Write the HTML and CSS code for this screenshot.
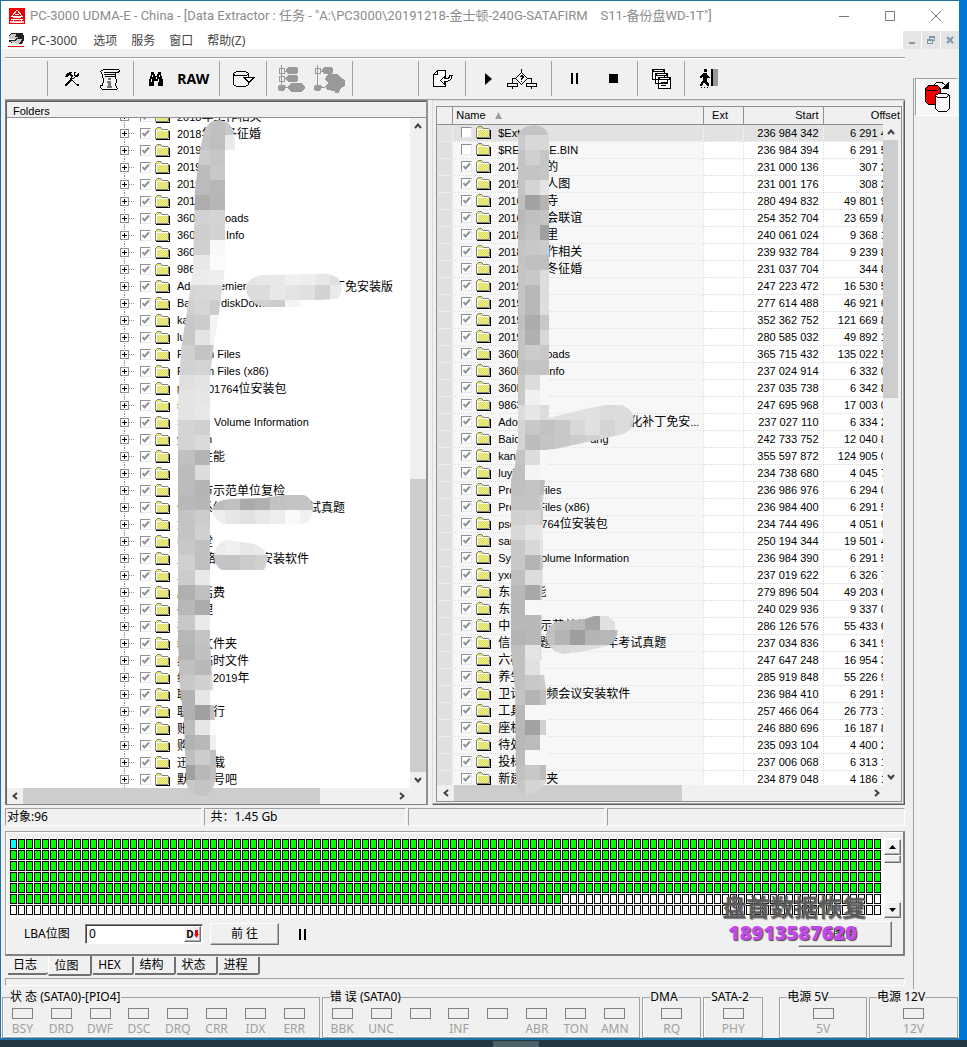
FILE: index.html
```html
<!DOCTYPE html>
<html lang="zh-CN">
<head>
<meta charset="utf-8">
<title>PC-3000 UDMA-E - China</title>
<link rel="stylesheet" href="styles.css">
</head>
<body>
<svg class="defs" aria-hidden="true">
  <defs>
    <pattern id="dither" width="2" height="2" patternUnits="userSpaceOnUse">
      <rect width="2" height="2" fill="#ffff00"/><rect width="1" height="1" fill="#ccccee"/><rect x="1" y="1" width="1" height="1" fill="#ccccee"/>
    </pattern>
    <symbol id="folder" viewBox="0 0 15 13">
      <path d="M1 2h1V1h4v1h1v1h6v8H1z" fill="url(#dither)"/>
      <path d="M2 0h4v1H2zM1 1h1v1H1zM6 1h1v1H6zM7 2h6v1H7zM0 2h1v9H0zM0 11h13v1H0zM13 3h1v8h-1z" fill="#808080"/>
      <path d="M1 3h12v1H1zM1 3h1v8H1z" fill="#fff"/>
      <path d="M1 12h14v1H1zM14 4h1v9h-1z" fill="#000"/>
    </symbol>
    <symbol id="up" viewBox="0 0 8 6"><path d="M1 5 4 1.500 7 5" fill="none" stroke="#404040" stroke-width="2"/></symbol>
    <symbol id="down" viewBox="0 0 8 6"><path d="M1 1 4 4.500 7 1" fill="none" stroke="#404040" stroke-width="2"/></symbol>
    <symbol id="left" viewBox="0 0 6 8"><path d="M5 1 1.500 4 5 7" fill="none" stroke="#404040" stroke-width="2"/></symbol>
    <symbol id="right" viewBox="0 0 6 8"><path d="M1 1 4.500 4 1 7" fill="none" stroke="#404040" stroke-width="2"/></symbol>
  </defs>
</svg>
<div class="desktop">
  <div class="window">
    <header class="titlebar">
      <svg class="i16" viewBox="0 0 16 16" shape-rendering="crispEdges"><rect width="16" height="16" fill="#f00000"/><path d="M8 2 3 8h10zM4 9h8M2 11h12M4 11v3h8v-3" fill="none" stroke="#fff" stroke-width="1"/><path d="M1 13h14v2H1z" fill="#fff" opacity=".8"/><path d="M6 6h4v1H6z" fill="#fff"/></svg>
      <span class="title">PC-3000 UDMA-E - China - [Data Extractor : 任务 - "A:\PC3000\20191218-金士顿-240G-SATAFIRM &nbsp;&nbsp; S11-备份盘WD-1T"]</span>
      <button class="cap" aria-label="最小化"><svg viewBox="0 0 10 10"><path d="M0 5.500h10" stroke="#777"/></svg></button>
      <button class="cap" aria-label="最大化"><svg viewBox="0 0 10 10"><path d="M.5.500h9v9h-9z" fill="none" stroke="#777"/></svg></button>
      <button class="cap" aria-label="关闭"><svg viewBox="0 0 10 10"><path d="M0 0l10 10M10 0 0 10" stroke="#777"/></svg></button>
    </header>
    <nav class="menubar">
      <svg class="i16" viewBox="0 0 16 15" shape-rendering="crispEdges"><path d="M4 0h10l2 3v5l-2 3H4L1 9V3z" fill="#222"/><path d="M1 4l3-3h5l-2 3 3 1-5 2-4-1zM3 9l5-1 2-2 4 1-3 4H4z" fill="#c8c8c8"/><path d="M1 6h6v1H1zM3 10h5v1H3z" fill="#fff"/><path d="M0 13h16v1H0z" fill="#e00000"/></svg>
      <button>PC-3000</button><button>选项</button><button>服务</button><button>窗口</button><button>帮助(Z)</button>
      <span class="mdi">
        <button aria-label="最小化子窗口"><svg viewBox="0 0 8 8"><path d="M1 6h6v2H1z" fill="#8097a5"/></svg></button>
        <button aria-label="还原子窗口"><svg viewBox="0 0 8 8" shape-rendering="crispEdges"><path d="M2 0h6v5H6V4h1V2H3v1H2zM0 3h6v5H0zM1 5v2h4V5z" fill="#8097a5" fill-rule="evenodd"/></svg></button>
        <button aria-label="关闭子窗口"><svg viewBox="0 0 8 8"><path d="M1 1l6 6M7 1 1 7" stroke="#8097a5" stroke-width="2"/></svg></button>
      </span>
    </nav>
    <div class="workspace">
      <div class="work">
        <div class="toolbar">
          <div class="tg g-first"></div>
          <div class="tg g-two">
            <button aria-label="工具"><svg width="16" height="16" viewBox="0 0 16 16" shape-rendering="crispEdges"><path d="M1 5h1V3h1V2h2V1h3v1H7v1h1v1h1v2H7V5H6V4H5v1H4v1H1zM10 1h2v1h-1v2h2V3h1V2h1v3h-1v1h-3V5h-1zM7 6h1v1h1v1h1v1h1v1h1v1h1v1h1v1h1v2h-2v-1h-1v-1h-1v-1h-1v-1H9v-1H8V9H7V8H6V7h1zM10 6h1v1h-1v1H9v1H8v1H7v1H6v1H5v1H4v1H3v1H1v-2h1v-1h1v-1h1v-1h1v-1h1V8h3V7h1z"/><path d="M8 8h1v1h1v1h1v1h1v1h1v1" fill="none" stroke="#fff"/></svg></button>
            <button aria-label="任务信息"><svg width="22" height="22" viewBox="0 0 22 22" shape-rendering="crispEdges"><path d="M4.500 1.500h15l1 1-1 2h-3v4l1 4-1 5 2 3-1 1h-14l-2-2v-2h2l1-5-1-6-2-3z" fill="#f4f4f4" stroke="#000"/><path d="M5 4.500h12M5 6.500h11M6 8.500h11" stroke="#000"/><path d="M9 10h3v2H9zM8 13h4v5h1v2H8v-2h1v-3H8z" fill="#777"/></svg></button>
          </div>
          <div class="tg g-two">
            <button aria-label="查找"><svg width="16" height="14" viewBox="0 0 16 14" shape-rendering="crispEdges"><path d="M3 0h3v2h1v2h2V2h1V0h3v3l1 2 1 4v5h-5V9H6v5H1V9l1-4 1-2z"/><path d="M4 3v2M3 7v3M11 3v2M10 7v3M8 5v2" stroke="#fff"/></svg></button>
            <button class="raw">RAW</button>
          </div>
          <div class="tg g-one">
            <button aria-label="导出"><svg width="23" height="18" viewBox="0 0 23 18" shape-rendering="crispEdges"><path d="M1.500 3.500l3-2h9l3 2v11l-3 2h-9l-3-2z" fill="#f8f8f8" stroke="#000"/><path d="M1 4.500l3 1h9l4-1" fill="none" stroke="#000"/><path d="M12 7.500h10l-5 5z" fill="#f8f8f8" stroke="#000"/></svg></button>
          </div>
          <div class="tg g-two">
            <button aria-label="展开树"><svg width="27" height="28" viewBox="0 0 27 28" shape-rendering="crispEdges"><g fill="none" stroke="#999"><path d="M3.500 0v22M1 3h5v5H1zM1 11h5v5H1zM6 6h4M6 13h4M6 22h5"/></g><g fill="#999"><path d="M10 2h8l2 2v3l-2 2h-8L8 7V4zM10 10h8l2 2v3l-2 2h-8l-2-2v-3zM1 20h5l2 2-2 4H1l-1-3zM14 18h9l4 3v3l-4 3h-9l-4-3v-3z"/></g></svg></button>
            <button aria-label="展开分支"><svg width="31" height="28" viewBox="0 0 31 28" shape-rendering="crispEdges"><g fill="none" stroke="#999"><path d="M3.500 0v22M1 3h5v5H1zM6 6h4M6 22h5"/></g><g fill="#999"><path d="M10 2h7l2 2v3l-2 2h-7L8 7V4zM1 20h5l2 2-2 4H1l-1-3zM12 11l3-2h8l3 3 5 3v6l-5 3-1 4h-4v-2l-8-1-2-4 3-3-3-3z"/></g></svg></button>
          </div>
          <div class="tg g-mid"></div>
          <div class="tg g-one">
            <button aria-label="转到"><svg width="21" height="20" viewBox="0 0 21 20" shape-rendering="crispEdges"><path d="M5.500 1.500h8v16h-12v-12z" fill="#fff" stroke="#000"/><path d="M1 5.500h4.500V1" fill="none" stroke="#000"/><path d="M8.500 11.500l4-4v2c3 1 5 0 5-3h2.500c0 4-3 6-7.500 6v3z" fill="#fff" stroke="#000"/></svg></button>
          </div>
          <div class="tg g-two tight">
            <button aria-label="开始"><svg width="7" height="12" viewBox="0 0 7 12"><path d="M0 0l7 6-7 6z"/></svg></button>
            <button aria-label="流程"><svg width="30" height="20" viewBox="0 0 30 20" shape-rendering="crispEdges"><path d="M14.500 0v3M14.500 3.500l6 6-6 6-6-6zM9 9.500H5.500V14M20 9.500h4.500V14M.5 14.500h10v3H.5zM19.500 14.500h10v3h-10zM5.500 18v2M24.500 18v2" fill="none" stroke="#000"/><path d="M13 7h1V6h2v1h1v2h-1v1h-1v1h-1V9h1V8h-2zM14 12h1v1h-1z"/></svg></button>
          </div>
          <div class="tg g-two even">
            <button aria-label="暂停"><svg width="8" height="11" viewBox="0 0 8 11"><path d="M0 0h2v11H0zM5 0h2v11H5z"/></svg></button>
            <button aria-label="停止"><svg width="9" height="9" viewBox="0 0 9 9"><path d="M0 0h9v9H0z"/></svg></button>
          </div>
          <div class="tg g-one">
            <button aria-label="窗口"><svg width="19" height="20" viewBox="0 0 19 20" shape-rendering="crispEdges"><g fill="#fff" stroke="#000"><path d="M.5.500h12v10H.5zM3.500 4.500h12v10h-12zM6.500 8.500h12v11h-12z"/></g><path d="M0 0h13v3H0zM3 4h13v3H3zM6 8h13v3H6z"/><path d="M2 1h9v1H2zM5 5h9v1H5zM8 9h9v1H8z" fill="#fff"/><path d="M9 13h7v1H9zM9 16h5v1H9z"/></svg></button>
          </div>
          <div class="tg g-last">
            <button aria-label="退出"><svg width="18" height="19" viewBox="0 0 18 19" shape-rendering="crispEdges"><path d="M4 0h3v3H4zM3 4h4l1 3 2 1v1H7v3l2 3v2H7l-3-4-2 4H0v-1l3-5V7L2 9H0V8zM11 0h2v17h-2z"/><path d="M13 0h5v17h-5z" fill="#999"/><path d="M1 18.500h1M4 18.500h1M7 18.500h1" stroke="#000"/></svg></button>
          </div>
        </div>

        <div class="panels">
          <section class="folders">
            <h2>Folders</h2>
            <div class="tree-area">
              <ul class="tree" id="tree"></ul>
              <div class="vscroll">
                <button aria-label="向上"><svg width="8" height="6"><use href="#up"/></svg></button><span class="track tree-track"><span class="thumb"></span></span><button aria-label="向下"><svg width="8" height="6"><use href="#down"/></svg></button>
              </div>
            </div>
            <div class="hscroll">
              <button aria-label="向左"><svg width="6" height="8"><use href="#left"/></svg></button><span class="track tree-htrack"><span class="thumb"></span></span><button aria-label="向右"><svg width="6" height="8"><use href="#right"/></svg></button>
            </div>
            <svg class="mosaic" id="mosaic-left" width="424" height="704" viewBox="5 100 424 704"></svg>
          </section>
          <section class="files">
            <div class="files-in">
              <div class="list-area">
                <table>
                  <colgroup><col class="c-mark"><col><col class="c-ext"><col class="c-start"><col class="c-off"></colgroup>
                  <thead><tr><th></th><th class="n">Name <svg width="7" height="7" viewBox="0 0 7 7"><path d="M3.500 0 7 7H0z" fill="#a0a0a0"/></svg></th><th class="x">Ext</th><th class="r">Start</th><th class="o">Offset</th></tr></thead>
                  <tbody id="rows"></tbody>
                </table>
                <div class="vscroll over">
                  <button aria-label="向上"><svg width="8" height="6"><use href="#up"/></svg></button><span class="track list-track"><span class="thumb"></span></span><button aria-label="向下"><svg width="8" height="6"><use href="#down"/></svg></button>
                </div>
              </div>
              <div class="hscroll">
                <button aria-label="向左"><svg width="6" height="8"><use href="#left"/></svg></button><span class="track list-htrack"><span class="thumb"></span></span><button aria-label="向右"><svg width="6" height="8"><use href="#right"/></svg></button>
              </div>
            </div>
            <svg class="mosaic" id="mosaic-right" width="472" height="704" viewBox="432 100 472 704"></svg>
          </section>
        </div>

        <div class="status"><span>对象:96</span><span>共：1.45 Gb</span><span></span><span class="wide"></span></div>

        <section class="bitmap">
          <div class="map-row">
            <svg class="map" id="map" width="873" height="78" shape-rendering="crispEdges"></svg>
            <div class="classic"><button aria-label="上"><svg width="7" height="4"><path d="M3.500 0 7 4H0z"/></svg></button><span class="nub"></span><button aria-label="下"><svg width="7" height="4"><path d="M0 0h7L3.500 4z"/></svg></button></div>
          </div>
          <div class="goto">
            <label for="lba">LBA位图</label>
            <span class="field"><input id="lba" value="0"><button aria-label="进制"><b>D</b><svg width="5" height="8" viewBox="0 0 5 8"><path d="M1 0h3v4h1L2.500 8 0 4h1z" fill="#f00000"/></svg></button></span>
            <button class="push go">前 往</button>
            <svg width="8" height="11" viewBox="0 0 8 11"><path d="M0 0h2v11H0zM5 0h2v11H5z"/></svg>
            <button class="push legend-btn">图例</button>
          </div>
          <div class="mark"><span>盘首数据恢复</span><b>18913587620</b></div>
        </section>
        <div class="tabs"><button>日志</button><button class="on">位图</button><button>HEX</button><button>结构</button><button>状态</button><button>进程</button></div>
        <div class="strip"></div>
      </div>
      <aside class="side">
        <button aria-label="数据提取"><svg width="26" height="32" viewBox="0 0 26 32" shape-rendering="crispEdges"><path d="M1.500 7.500l3-3h9l3 3v13l-3 3h-9l-3-3z" fill="#f00000" stroke="#000"/><path d="M1 7.500l3 2h9l3-2" fill="none" stroke="#000"/><path d="M11.500 14.500l3-2h8l3 2v13l-3 3h-8l-3-3z" fill="#fff" stroke="#000"/><path d="M11 14.500l3 2h8l3-2M10 3.500l3-2h5l4 3" fill="none" stroke="#000"/><path d="M25 0v8h-8z"/></svg></button>
      </aside>
    </div>
    <footer class="leds" id="leds"></footer>
  </div>
  <div class="taskbar"><span></span></div>
</div>
<script src="script.js"></script>
</body>
</html>
```
FILE: styles.css
```css
* { box-sizing: border-box; }
body {
  margin: 0;
  font: 12px/16px "Noto Sans", "Noto Sans CJK SC", sans-serif;
  color: #000;
}
button { font: inherit; color: inherit; margin: 0; padding: 0; border: 0; background: none; display: flex; align-items: center; justify-content: center; }
.defs { position: absolute; width: 0; height: 0; }
.desktop { height: 100vh; display: flex; flex-direction: column; background: #0078d7; }
.window {
  flex: 1; min-height: 0; margin-right: 8px; display: flex; flex-direction: column;
  background: #f0f0f0; border: 1px solid #1c74a8; border-right: 0; border-bottom-width: 2px;
}
.taskbar { height: 7px; background: #233842; display: flex; justify-content: center; }
.taskbar span { width: 46px; margin: 1px 0 0 65px; background: #4d5f67; }

.titlebar { height: 30px; display: flex; align-items: center; background: #fff; color: #8c8c8c; padding-left: 8px; }
.i16 { width: 16px; height: 16px; flex: none; }
.title { flex: 1; padding-left: 5px; white-space: nowrap; font-family: Roboto, "Noto Sans CJK SC", sans-serif; font-size: 13px; }
.cap { width: 46px; height: 30px; }
.cap svg { width: 10px; height: 10px; }
.menubar { height: 18px; display: flex; align-items: center; background: #fff; color: #444; padding-left: 7px; }
.menubar > button { margin: 0 7px; padding-top: 2px; }
.menubar > button:nth-of-type(2) { margin-left: 9px; }
.mdi { margin-left: auto; display: flex; gap: 1px; align-self: stretch; }
.mdi button { width: 18px; height: 18px; background: #e5e5e5; }
.mdi svg { width: 8px; height: 8px; }

.workspace { flex: 1; min-height: 0; display: flex; padding-top: 8px; }
.work { flex: 1; min-width: 0; display: flex; flex-direction: column; padding: 0 8px 0 4px; }
.side { width: 46px; margin-top: 21px; border-left: 1px solid #a0a0a0; padding-left: 1px; }
.side button { width: 43px; height: 38px; background: #f6f6f6; border: 1px solid #a0a0a0; border-right-color: #fff; border-bottom-color: #fff; }

.toolbar { height: 43px; border-top: 1px solid #a0a0a0; border-bottom: 1px solid #a0a0a0; box-shadow: inset 0 1px #fff; display: flex; padding: 3px 0; }
.tg { display: flex; align-items: center; justify-content: space-around; border-right: 1px solid #a0a0a0; }
.g-first { width: 43px; }
.g-two { width: 86px; padding: 0 3px 0 7px; }
.g-one { width: 47px; }
.g-mid { width: 66px; }
.g-last { width: 47px; border: 0; }
.even { padding: 0 4px; }
.tight { padding: 0 0 0 5px; justify-content: space-evenly; }
.raw { font-size: 14px; font-weight: 700; }

.panels { flex: 1; min-height: 0; display: flex; gap: 4px; }
.folders { flex: 424; min-width: 0; display: flex; flex-direction: column; position: relative; border: 1px solid #808080; border-right: 2px solid #909090; box-shadow: inset 1px 1px #606060; }
.folders h2 { margin: 1px 0 0 1px; padding-left: 6px; height: 16px; font: 11px/18px "Liberation Sans", sans-serif; border-bottom: 1px solid #909090; }
.tree-area { flex: 1; min-height: 0; display: flex; margin-left: 1px; background: #fff; }
.tree { flex: 1; min-width: 0; margin: 0; padding: 0; list-style: none; overflow: hidden; }
.tree li:first-child { margin-top: -10px; }
.tree li, td.n > div { display: flex; align-items: center; height: 17px; white-space: nowrap; font: 11px/17px "Liberation Sans", "Noto Sans CJK SC", sans-serif; }
.tree li { padding-left: 112px; }
.han { font-family: "Noto Sans CJK SC", sans-serif; font-size: 12px; line-height: 16px; }
.branch { width: 21px; height: 17px; flex: none; }
.tick { appearance: none; width: 11px; height: 11px; flex: none; margin: 0 4px 0 0; background: #fff; border: 1px solid #909090; border-right-color: #e8e8e8; border-bottom-color: #e8e8e8; }
.tick:checked { background: #fff url("data:image/svg+xml,%3Csvg xmlns='http://www.w3.org/2000/svg' viewBox='0 0 9 9'%3E%3Cpath d='M1.500 4 3.500 6.500 8 1.500' fill='none' stroke='%23909090' stroke-width='2'/%3E%3C/svg%3E") center/9px 9px; }
.folder { width: 15px; height: 13px; flex: none; margin-right: 7px; }
.part { flex: none; overflow: hidden; }
.part:last-child { overflow: visible; }
.mosaic { position: absolute; left: -1px; top: -1px; pointer-events: none; }

.vscroll { width: 16px; display: flex; flex-direction: column; background: #f0f0f0; flex: none; }
.vscroll button, .hscroll button { width: 16px; height: 16px; flex: none; }
.hscroll { display: flex; height: 16px; flex: none; background: #f0f0f0; margin-left: 1px; padding-right: 16px; }
.track { flex: 1; display: flex; min-width: 0; min-height: 0; }
.vscroll .track { flex-direction: column; }
.thumb { background: #cdcdcd; }
.tree-track { justify-content: flex-end; }
.tree-track .thumb { height: 46%; }
.tree-htrack .thumb { width: 80%; }
.list-track .thumb { height: 41%; }
.list-htrack .thumb { width: 55%; }

.files { flex: 471; min-width: 0; position: relative; display: flex; padding: 5px 2px 2px 3px; border: 1px solid #dcdcdc; border-right: 1px solid #606060; border-bottom: 1px solid #606060; box-shadow: inset -1px -1px #a0a0a0; }
.files-in { flex: 1; min-width: 0; display: flex; flex-direction: column; border: 1px solid #909090; }
.list-area { flex: 1; min-height: 0; overflow: hidden; position: relative; background: #fff; }
.over { position: absolute; right: 0; top: 17px; bottom: 0; width: 18px; padding-right: 3px; }
table { width: 100%; border-collapse: collapse; table-layout: fixed; font: 11px/16px "Liberation Sans", sans-serif; }
.c-mark { width: 16px; }
.c-ext { width: 40px; }
.c-start { width: 80px; }
.c-off { width: 78px; }
th { height: 17px; padding: 1px 0 0; background: #f0f0f0; font-weight: 400; line-height: 15px; border-right: 1px solid #909090; border-bottom: 1px solid #909090; white-space: nowrap; }
th.n { text-align: left; padding-left: 3px; }
th.n svg { margin-left: 6px; }
th.x { text-align: center; padding-right: 6px; }
th.r { text-align: right; padding-right: 4px; }
th.o { text-align: right; border-right: 0; padding-right: 1px; }
td { height: 17px; padding: 0; border-right: 1px dotted #dcdcdc; border-bottom: 1px dotted #dcdcdc; text-align: right; white-space: nowrap; overflow: hidden; }
td:first-child { background: #e0e0e0; }
td.n { background: #f7f7f7; text-align: left; }
td.n > div { height: 16px; padding-left: 8px; line-height: 16px; }
td.num { padding-right: 4px; }
td.off { padding-right: 2px; border-right: 0; }
tbody tr:first-child td { background: #e2e2e2; }

.status { display: flex; gap: 2px; margin-top: 3px; height: 18px; flex: none; }
.status span { flex: 198; padding-left: 1px; border: 1px solid #a0a0a0; border-right-color: #fff; border-bottom-color: #fff; }
.status span:nth-child(2) { padding-left: 5px; }
.status .wide { flex: 300; }

.bitmap { position: relative; flex: none; margin-top: 5px; border: 1px solid #a0a0a0; border-bottom: 2px solid #808080; border-right: 2px solid #808080; padding: 6px 2px 4px 4px; box-shadow: inset 1px 1px #fff; }
.map-row { display: flex; background: #fff; height: 80px; padding-top: 1px; }
.map { flex: 1; min-width: 0; }
.classic { width: 17px; display: flex; flex-direction: column; background: #f6f6f6; }
.classic button, .nub, .push, .field button { background: #f0f0f0; border: 1px solid #fff; border-right-color: #707070; border-bottom-color: #707070; box-shadow: inset -1px -1px #b0b0b0; }
.classic button { height: 16px; width: 17px; }
.nub { height: 8px; margin-bottom: auto; }
.goto { display: flex; align-items: center; height: 32px; padding-left: 14px; }
.goto label { width: 61px; }
.field { display: flex; width: 118px; height: 20px; background: #fff; border: 1px solid #808080; border-right-color: #fff; border-bottom-color: #fff; box-shadow: inset 1px 1px #404040; padding: 1px; }
.field input { flex: 1; min-width: 0; border: 0; background: none; padding: 0 2px; font: inherit; }
.field button { width: 17px; font-size: 10px; }
.push { height: 22px; }
.go { width: 69px; margin: 0 20px 0 7px; }
.legend-btn { width: 94px; margin: 0 9px 0 auto; height: 26px; }
.mark { position: absolute; right: 37px; top: 62px; display: flex; flex-direction: column; line-height: 26px; font-size: 24px; font-weight: 700; color: rgba(80, 80, 80, .75); text-shadow: 1px 1px 1px #777; }
.mark b { padding-left: 6px; font-size: 20px; color: #c548ee; text-shadow: 1px 1px 1px #444; }

.tabs { display: flex; flex: none; height: 20px; padding-left: 3px; align-items: flex-start; margin-top: 1px; }
.tabs button { width: 41px; height: 18px; margin-right: 1px; padding-right: 6px; border: solid #707070; border-width: 0 2px 2px 0; border-bottom-right-radius: 3px; }
.tabs button:first-child { width: 40px; margin-right: 0; border-right: 0; }
.tabs .on { height: 20px; width: 44px; margin-top: -1px; padding-top: 2px; border-left: 1px solid #fff; background: #f0f0f0; }
.strip { height: 8px; flex: none; margin: 1px 0 3px; border: 1px solid #a0a0a0; border-right-color: #fff; border-bottom-color: #fff; }

.leds { display: grid; grid-template-columns: 318fr 319fr 59fr 60fr 12fr 88fr 89fr; gap: 2px; padding: 0 1px 1px; flex: none; height: 49px; }
fieldset { min-width: 0; margin: 0; padding: 3px 0 0; border: 1px solid #a0a0a0; box-shadow: inset 1px -1px #fff; display: flex; }
fieldset:nth-child(-n+2) { padding-right: 5px; }
fieldset:nth-child(5) { grid-column: 6; }
legend { padding: 0; margin-left: 7px; line-height: 16px; }
.led { flex: 1 1 0; min-width: 0; text-align: center; color: #a0a0a0; }
.led i { display: block; width: 21px; height: 11px; margin: 0 auto 2px; border: 1px solid #808080; }
```
FILE: script.js
```js
const hanWrap = s => s.replace(/[\u3000-\u9fff]+/g, '<span class="han">$&</span>');

// Each name is a list of text runs with the column where the run begins.
function nameRuns(runs, start) {
  return runs.map((r, i) => {
    const next = runs[i + 1];
    const from = i ? r[0] : start;
    const w = next ? ` style="width:${next[0] - from}px"` : '';
    return `<span class="part"${w}>${hanWrap(r[1])}</span>`;
  }).join('');
}
const folder = '<svg class="folder" shape-rendering="crispEdges"><use href="#folder"/></svg>';

const tree = [
  '2018年工作相关', '2018年|225|冬征婚', '2019', '2019', '2019', '2019', '360|225|oads', '360|226|Info', '360', '986',
  'Adobe|219|emiere|333|丁免安装版', 'Baidu|221|diskDown', 'kanku', 'luyin', 'Pro|205|m Files', 'Pro|205|m Files (x86)',
  'psd|208|01764位安装包', 'san', 'Sys|214|Volume Information', 'yxc|206|n', '东|201|性能', '东', '中|201|市示范单位复检',
  '信|201|系统|309|试真题', '六', '养|201|堂', '卫|204|络|261|安装软件', '工', '座|201|话费', '待|201|理', '投', '新|201|文件夹',
  '典|201|临时文件', '综|213|2019年', '联', '联|213|行', '账', '购', '迅|213|载', '默|213|号吧'
];
const split = s => { const p = s.split('|'), o = [[0, p[0]]]; for (let i = 1; i < p.length; i += 2) o.push([+p[i], p[i + 1]]); return o; };
document.getElementById('tree').innerHTML = tree.map(t =>
  `<li><svg class="branch" viewBox="0 0 21 17" shape-rendering="crispEdges"><path d="M5.500 0v17M10 8.500h6" stroke="#909090" stroke-dasharray="1 1"/><path d="M1.500 4.500h8v8h-8z" fill="#fff" stroke="#909090"/><path d="M3 8.500h5M5.500 6v5" stroke="#000"/></svg>` +
  `<input type="checkbox" class="tick" checked aria-label="选择">${folder}${nameRuns(split(t), 177)}</li>`).join('');

const rows = [
  ['$Extend', '236 984 342', '6 291 456'], ['$RE|543|LE.BIN', '236 984 394', '6 291 508'], ['2014|546|的', '231 000 136', '307 250'],
  ['2015|546|人图', '231 001 176', '308 290'], ['2016|546|寺', '280 494 832', '49 801 946'], ['2016|546|会联谊', '254 352 704', '23 659 818'],
  ['2018|546|里', '240 061 024', '9 368 138'], ['2018|546|作相关', '239 932 784', '9 239 898'], ['2018|546|冬征婚', '231 037 704', '344 818'],
  ['2019', '247 223 472', '16 530 586'], ['2019', '277 614 488', '46 921 602'], ['2019', '352 362 752', '121 669 866'], ['2019', '280 585 032', '49 892 146'],
  ['360D|546|oads', '365 715 432', '135 022 546'], ['360I|546|Info', '237 024 914', '6 332 028'], ['360I', '237 035 738', '6 342 852'],
  ['9863', '247 695 968', '17 003 082'], ['Adobe|630|化补丁免安...', '237 027 110', '6 334 224'], ['Baidu|590|ang', '242 733 752', '12 040 866'],
  ['kank', '355 597 872', '124 905 006'], ['luyin', '234 738 680', '4 045 794'], ['Prog|538|Files', '236 986 976', '6 294 090'],
  ['Prog|538|Files (x86)', '236 984 400', '6 291 514'], ['psd|535|1764位安装包', '234 744 496', '4 051 610'], ['san', '250 194 344', '19 501 458'],
  ['Syst|534|Volume Information', '236 984 390', '6 291 504'], ['yxc', '237 019 622', '6 326 736'], ['东城|534|能', '279 896 504', '49 203 618'],
  ['东城', '240 029 936', '9 337 050'], ['中|540|示范单位复检', '286 126 576', '55 433 690'], ['信息|539|题|606|年考试真题', '237 034 836', '6 341 950'],
  ['六楼', '247 647 248', '16 954 362'], ['养生', '285 919 848', '55 226 962'], ['卫计|546|频会议安装软件', '236 984 410', '6 291 524'],
  ['工具', '257 466 064', '26 773 178'], ['座机', '246 880 696', '16 187 810'], ['待处', '235 093 104', '4 400 218'],
  ['投标', '237 006 068', '6 313 182'], ['新建|546|夹', '234 879 048', '4 186 162']
];
document.getElementById('rows').innerHTML = rows.map((r, i) =>
  `<tr><td></td><td class="n"><div><input type="checkbox" class="tick" aria-label="选择"${i > 1 ? ' checked' : ''}>${folder}${nameRuns(split(r[0]), 498)}</div></td><td></td><td class="num">${r[1]}</td><td class="off">${r[2]}</td></tr>`).join('');

// Sector map: 109 cells in each of 7 lines.
let cells = '';
for (let y = 0; y < 7; y++) for (let x = 0; x < 109; x++) {
  const fill = !x && !y ? '#00ffff' : (y < 5 || (y === 5 && x < 69)) ? '#00ff00' : '#ffffff';
  cells += `<rect x="${x * 8 + .5}" y="${y * 11 + .5}" width="6" height="9" fill="${fill}" stroke="#000"/>`;
}
document.getElementById('map').innerHTML = cells;

// Privacy mosaic: 15px tiles, one string of tile greys per line, trimmed by an outline.
function mosaic(id, patches) {
  let defs = '', out = '';
  patches.forEach((p, k) => {
    defs += `<clipPath id="${id}c${k}"><path d="${p.d}"/></clipPath>`;
    out += `<g clip-path="url(#${id}c${k})">` + p.lines.map((l, j) => l.split(' ').map((c, i) =>
      `<rect x="${p.x + i * 15}" y="${p.y + j * 15}" width="15" height="15" fill="#${c}${c}${c}"/>`).join('')).join('') + '</g>';
  });
  const el = document.getElementById(id);
  el.setAttribute('shape-rendering', 'crispEdges');
  el.innerHTML = `<defs>${defs}</defs>${out}`;
}
mosaic('mosaic-left', [
  { x: 165, y: 120, d: 'M204 132Q208 120 219 120Q232 121 234 134L235 150H225V270L222 290L218 320L213 350L210 375V640L213 690L216 740V775Q214 796 201 796Q187 794 186 780L184 720L180 690L178 640V400L181 350L187 310L193 270L195 190L200 150Z',
    lines: ['c8 c8 c8 c0 c8', 'c4 c4 c4 bf ea', 'cc cc cc c6 fa', 'bc bc bc c8 fa', 'bb bb bb b7 fa', 'ad ad ad b6 fa', 'd2 d2 d2 d4 fa', 'ce ce ce d2 fa', 'd0 d0 d0 f8 fa', 'e8 e8 e8 fb fa', 'ec ec ec ee fa', 'd5 d5 d8 d8 fa', 'd0 d0 d5 cc fa', 'c8 c8 cc f4 fa', 'c8 c8 e4 f4 fa', 'd0 d0 c4 c8 fa', 'd2 d2 d4 d0 fa', 'e0 e0 e4', 'e4 e4 e6', 'e4 e4 e8', 'd4 d4 d0', 'd4 d4 da', 'c0 c0 b4', 'bc bc dc', 'bc bc b4', 'b8 b8 b6', 'c4 c4 cc', 'c4 c4 d0', 'c8 c8 c0', 'd0 d0 c0', 'cc cc e8', 'b0 b0 c0', 'b8 b8 ac', 'c8 c8 ea', 'b8 b8 c4', 'b4 b4 c0 c8', 'c0 c0 b8 c4', 'c8 c8 d0 d8', 'b2 b2 e6 fc', 'b2 b2 a0 c0', 'bc bc e6 fc', 'b2 b2 b8 f0', 'c0 c0 cc c0', 'a0 a0 b8 c0', 'c8 c8 c4 c8', 'c8 c8 c4 c8'] },
  { x: 240, y: 270, d: 'M246 288Q248 277 262 275L315 274Q328 272 338 278Q345 290 338 299L300 301V307L270 307Q248 307 246 288Z', lines: ['e4 e8 e8 f0 ee e8 e0', 'dc dc e8 e4 e0 d2 ea', 'd0 d0 cc f4 fa fa fa'] },
  { x: 210, y: 495, d: 'M212 510Q215 500 230 499L265 498L283 495H304Q313 498 313 510Q312 522 301 524H225Q214 522 212 510Z', lines: ['bc c0 aa b0 c2 c4 c4', 'ee e6 e2 e8 ee fa f0'] },
  { x: 210, y: 540, d: 'M214 555Q217 540 228 540L247 543Q266 544 268 560L264 570H222Q214 566 214 555Z', lines: ['ec f0 e8 ea', 'c4 c4 cc d0'] }
]);
mosaic('mosaic-right', [
  { x: 510, y: 120, d: 'M518 135Q522 125 535 125Q547 126 549 138V445L545 480L543 500V560L541 650L546 690V780L545 784Q535 796 526 794Q517 793 516 780L515 690L511 650V480L515 465L518 440Z',
    lines: ['c4 c4 c4', 'cc d8 d8', 'c4 d0 c6', 'c4 c4 c6', 'c4 d4 e4', 'c0 a2 b4', 'b8 c0 c4', 'bc c4 a0', 'c4 c8 cc', 'c4 c0 c0', 'c4 c8 dc', 'c4 b8 dc', 'c4 b8 de', 'c0 ac c8', 'c4 b0 d8', 'c4 cc c8', 'c0 c4 c4', 'c8 dc f7', 'c8 f0 f7', 'dc e6 dc', 'd4 c8 e0', 'd4 bc c4', 'c4 dc f7', 'c0 f4 f7', 'c0 c4 bc', 'c4 c4 d0', 'd0 d4 cc', 'd8 e4 e8', 'c8 d8 e4', 'c8 b4 c8', 'c0 dc dc', 'b8 a8 c8', 'b8 f7 f7', 'b8 b8 c0', 'b4 b8 c0', 'c0 e4 dc', 'c0 e0 f7', 'c0 c8 cc', 'c4 b4 c0', 'b8 f7 f7', 'b8 a2 d0', 'b8 bc f7', 'bc f7 f7', 'c0 c8 bc', 'c8 d4 d8'] },
  { x: 540, y: 405, d: 'M540 420L590 408L605 405H622Q634 410 634 421Q632 432 620 435L555 449L540 450Z', lines: ['e0 e0 e0 e0 dc dc dc', 'c2 c8 d8 e0 d4 dc d0', 'c4 c8 cc d0 d8 dc e0'] },
  { x: 540, y: 615, d: 'M546 635Q547 623 562 621L585 619L594 616H608L615 622V630H618Q617 642 607 646L580 652L563 654Q547 650 546 635Z', lines: ['c4 bc b8 a4 e0 e0', 'c0 b4 9e b4 b8 c0', 'd4 d8 dc dc e0 e0'] }
]);

const groups = [
  ['状 态 (SATA0)-[PIO4]', ['BSY', 'DRD', 'DWF', 'DSC', 'DRQ', 'CRR', 'IDX', 'ERR']],
  ['错 误 (SATA0)', ['BBK', 'UNC', '', 'INF', '', 'ABR', 'TON', 'AMN']],
  ['DMA', ['RQ']], ['SATA-2', ['PHY']], ['电源 5V', ['5V']], ['电源 12V', ['12V']]
];
document.getElementById('leds').innerHTML = groups.map(g =>
  `<fieldset><legend>${g[0]}</legend>${g[1].map(n => `<div class="led"><i></i>${n}</div>`).join('')}</fieldset>`).join('');
```
